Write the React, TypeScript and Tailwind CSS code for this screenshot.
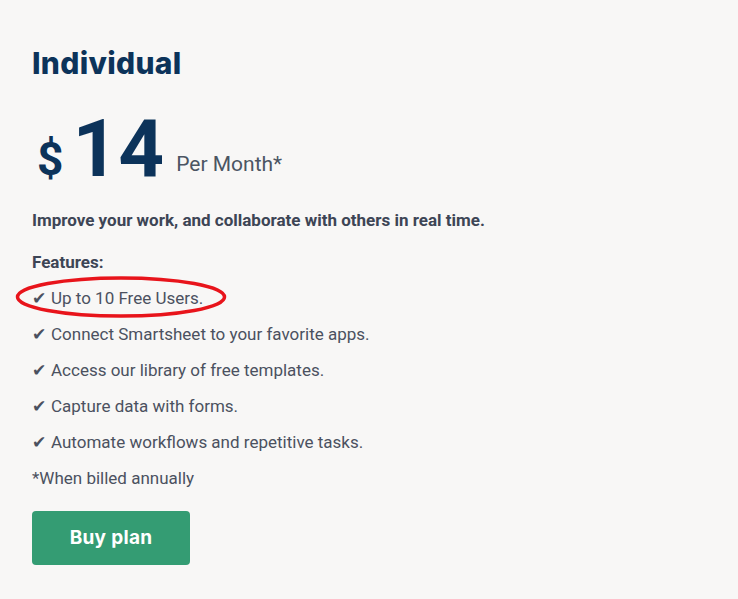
import React from "react";

const features = [
  "Up to 10 Free Users.",
  "Connect Smartsheet to your favorite apps.",
  "Access our library of free templates.",
  "Capture data with forms.",
  "Automate workflows and repetitive tasks.",
];

export default function App() {
  return (
    <div className="min-h-[599px] w-full bg-[#f8f7f6] px-8 pt-[44px] font-['Roboto',sans-serif] text-[#4b5160]">
      <h2 className="font-['Inter',sans-serif] text-[30px] font-extrabold leading-[38px] tracking-[0.3px] text-[#0c335a]">
        Individual
      </h2>

      <div className="mt-[28px] flex items-end text-[#0c335a]">
        <span className="mb-[6px] ml-[5px] text-[46px] font-bold leading-none">$</span>
        <span className="ml-[9px] text-[80px] font-bold leading-[78px]">14</span>
        <span className="mb-[13px] ml-[12px] text-[21px] leading-none text-[#4b5563]">Per Month*</span>
      </div>

      <p className="mt-[20px] text-[17px] font-bold leading-[24px] text-[#3d4555]">
        Improve your work, and collaborate with others in real time.
      </p>

      <p className="mt-[18px] text-[17px] font-bold leading-[24px] text-[#3d4555]">Features:</p>

      <ul className="relative mt-[6px]">
        {features.map((f) => (
          <li key={f} className="py-[6px] text-[17px] leading-[24px]">
            <span className="mr-[5px]">✔</span>
            {f}
          </li>
        ))}
        <svg className="pointer-events-none absolute left-[-18px] top-[-5px]" width="214" height="44" viewBox="0 0 214 44">
          <ellipse cx="107" cy="22" rx="103.5" ry="19" fill="none" stroke="#e8141b" strokeWidth="3.5" />
        </svg>
      </ul>

      <p className="mt-[6px] text-[17px] leading-[24px]">*When billed annually</p>

      <button className="mt-[21px] h-[54px] w-[158px] rounded-[4px] bg-[#349c73] font-['Inter',sans-serif] text-[19px] font-bold tracking-[0.3px] text-white">
        Buy plan
      </button>
    </div>
  );
}
